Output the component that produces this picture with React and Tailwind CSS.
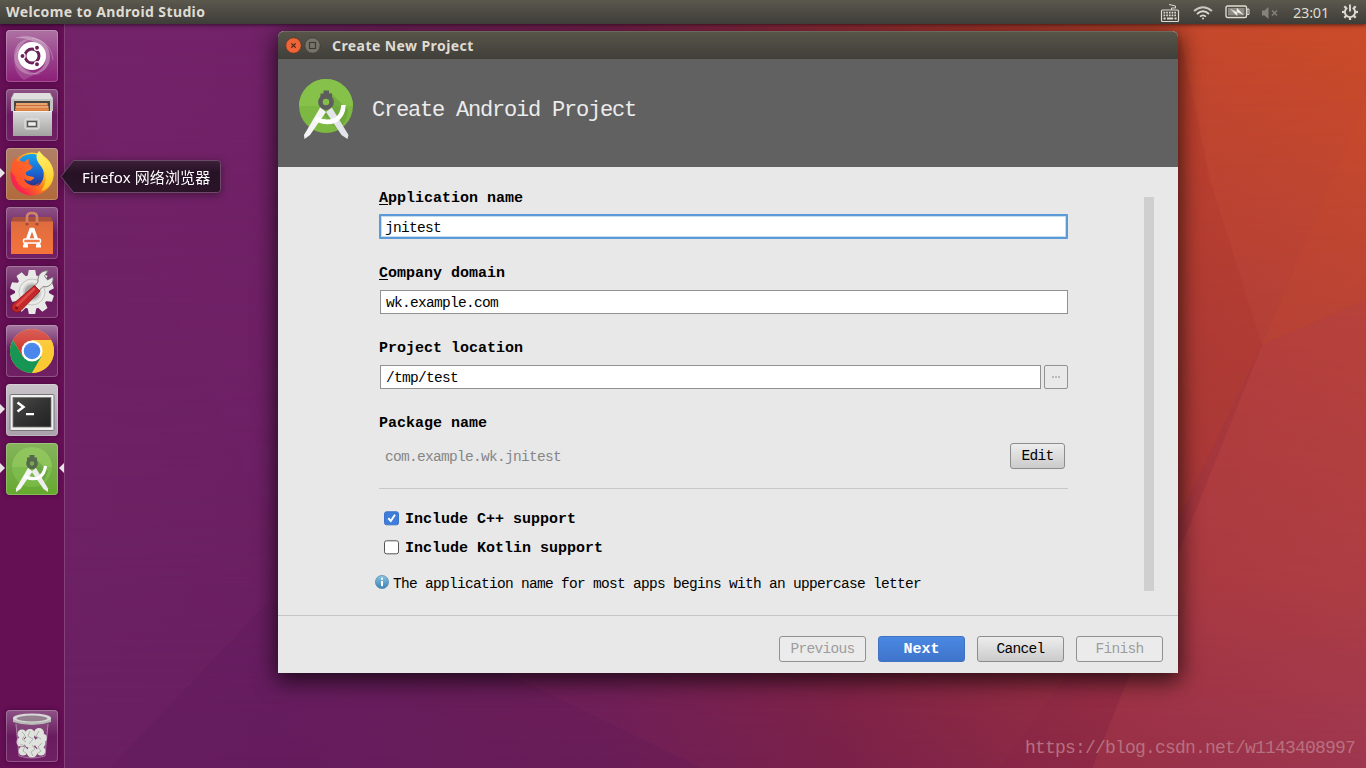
import React from 'react';

const MONO = "font-['Liberation_Mono',monospace]";
const BODY = `text-[14.5px] tracking-[-0.7px] ${MONO}`;
const UI = "font-['Noto_Sans','Noto_Sans_CJK_SC',sans-serif]";

function Wallpaper() {
  return (
    <svg className="absolute inset-0" width="1366" height="768" viewBox="0 0 1366 768" aria-hidden="true">
      <defs>
        <linearGradient id="wpBase" x1="0" y1="0" x2="1" y2="0">
          <stop offset="0" stopColor="#732468" />
          <stop offset="0.2" stopColor="#712267" />
          <stop offset="0.45" stopColor="#7d2150" />
          <stop offset="0.7" stopColor="#a8352f" />
          <stop offset="0.88" stopColor="#c5482c" />
          <stop offset="1" stopColor="#ca4b29" />
        </linearGradient>
        <linearGradient id="wpLow" x1="0" y1="0" x2="1" y2="0">
          <stop offset="0" stopColor="#6a2063" />
          <stop offset="0.2" stopColor="#681e60" />
          <stop offset="0.45" stopColor="#6e1f58" />
          <stop offset="0.62" stopColor="#7a2149" />
          <stop offset="0.8" stopColor="#8f2b46" />
          <stop offset="1" stopColor="#973450" />
        </linearGradient>
        <linearGradient id="wpFade" x1="0" y1="0" x2="0" y2="1">
          <stop offset="0.05" stopColor="#000" />
          <stop offset="0.45" stopColor="#666" />
          <stop offset="0.75" stopColor="#999" />
          <stop offset="1" stopColor="#fff" />
        </linearGradient>
        <mask id="wpMask"><rect width="1366" height="768" fill="url(#wpFade)" /></mask>
      </defs>
      <rect width="1366" height="768" fill="url(#wpBase)" />
      <rect width="1366" height="768" fill="url(#wpLow)" mask="url(#wpMask)" />
      <path d="M64 24L110 180L270 520L278 24Z" fill="#7a2670" opacity=".14" />
      <path d="M270 600L110 768L700 768L480 660Z" fill="#4d1450" opacity=".12" />
      <path d="M1178 24L1210 180L1262 345L1178 520Z" fill="#a82e28" opacity=".18" />
      <path d="M1366 100L1262 345L1366 300Z" fill="#d2552c" opacity=".12" />
      <path d="M1262 345L1366 300L1366 768L1092 768Z" fill="#b8424e" opacity=".2" />
      <path d="M1262 345L1178 520L1000 768L1092 768Z" fill="#84204a" opacity=".18" />
    </svg>
  );
}

function KeyboardIcon() {
  return (
    <svg width="20" height="20" viewBox="0 0 20 20" fill="none" stroke="#dfdbd2" strokeWidth="1.2">
      <path d="M11.5 7V5L15.5 5V3L9 1.500" strokeWidth="1" />
      <rect x="1.5" y="7" width="17" height="11.5" rx="1" />
      <path d="M3.5 9.7h13M3.5 12.3h13" strokeWidth="1.8" strokeDasharray="1.7 1" />
      <path d="M3.5 15.5h2.2M7 15.5h6.2M14.5 15.5h2" strokeWidth="1.8" />
    </svg>
  );
}

function WifiIcon() {
  return (
    <svg width="20" height="16" viewBox="0 0 20 16" fill="none" stroke="#dfdbd2" strokeWidth="1.8">
      <path d="M1 6Q10-1.500 19 6" opacity=".85" />
      <path d="M4 9Q10 3.500 16 9" />
      <path d="M7 11.700Q10 9 13 11.700" />
      <circle cx="10" cy="13.500" r="1" fill="#dfdbd2" stroke="none" />
    </svg>
  );
}

function BatteryIcon() {
  return (
    <svg width="25" height="14" viewBox="0 0 25 14">
      <rect x="1" y="1" width="20.500" height="11.500" rx="1.500" fill="none" stroke="#dfdbd2" strokeWidth="1.400" />
      <rect x="3" y="3" width="16.500" height="7.500" fill="#8d8a82" />
      <path d="M22 4h2v5.500h-2z" fill="none" stroke="#dfdbd2" strokeWidth="1" />
      <path d="M6 4.500L12 7.500V3.300L18 9.500L12 6.800V10.500Z" fill="#fff" stroke="#dfdbd2" strokeWidth=".6" />
    </svg>
  );
}

function MutedIcon() {
  return (
    <svg width="18" height="14" viewBox="0 0 18 14">
      <path d="M1 4.500h2.500L7.500 1v12L3.500 9.500H1z" fill="#85827a" />
      <path d="M11 4.500l5 5M16 4.500l-5 5" stroke="#85827a" strokeWidth="1.500" />
    </svg>
  );
}

const RAYS = [45, 90, 135, 180, 225, 270, 315];

function SessionIcon() {
  return (
    <svg width="18" height="18" viewBox="0 0 18 18" fill="none" stroke="#dfdbd2">
      <path d="M6.300 4.700A5.100 5.100 0 1 0 11.700 4.700" strokeWidth="1.900" />
      <path d="M9 1.500v7" strokeWidth="1.900" />
      {RAYS.map((a) => <path key={a} d="M9 3.500V1" strokeWidth="2.200" transform={`rotate(${a} 9 9)`} />)}
    </svg>
  );
}

function TopPanel() {
  return (
    <header className="relative flex h-6 items-center justify-between bg-linear-to-b from-[#5b584d] to-[#3e3d38] pr-[11px] pl-1.5 shadow-[0_1px_4px_rgba(0,0,0,0.6)]">
      <span className={`text-[14px] leading-6 font-bold tracking-[0.39px] text-[#dfdbd2] ${UI}`}>Welcome to Android Studio</span>
      <div className="flex h-6 items-center">
        <div className="mt-0.5 mr-[13px]"><KeyboardIcon /></div>
        <div className="mt-px mr-3"><WifiIcon /></div>
        <div className="mr-[11px]"><BatteryIcon /></div>
        <div className="mt-px mr-3.5"><MutedIcon /></div>
        <span className={`mr-3 w-9 text-[14.5px] leading-6 tracking-[-0.2px] whitespace-nowrap text-[#dfdbd2] ${UI}`}>23:01</span>
        <div className="-mr-1"><SessionIcon /></div>
      </div>
    </header>
  );
}

function DashArt() {
  return (
    <svg width="52" height="52" viewBox="0 0 52 52">
      <path d="M9 8C22 3 44 8 44 27C44 39 34 45 24 44C36 42 41 34 39 25C36 12 22 8 9 8Z" fill="#fff" opacity=".32" />
      <path d="M9 20C4 36 18 50 36 43C26 45 14 38 12 28C11 20 16 12 24 9C16 9 11 13 9 20Z" fill="#fff" opacity=".25" />
      <path d="M18 50C6 42 6 24 14 15C10 30 14 40 28 45Z" fill="#fff" opacity=".15" />
      <path d="M26 8C38 10 46 18 47 30" fill="none" stroke="#fff" opacity=".25" />
      <circle cx="26" cy="26" r="14" fill="#fff" />
      <circle cx="26" cy="26" r="7" fill="none" stroke="#6b2058" strokeWidth="3" />
      <g fill="#6b2058" stroke="#fff" strokeWidth="1.300">
        <circle cx="16.500" cy="26" r="2.600" /><circle cx="31" cy="17.700" r="2.600" /><circle cx="31" cy="34.300" r="2.600" />
      </g>
    </svg>
  );
}

function FilesArt() {
  return (
    <svg width="52" height="52" viewBox="0 0 52 52">
      <defs><linearGradient id="cab" x1="0" y1="0" x2="0" y2="1"><stop offset="0" stopColor="#dcdcdc" /><stop offset="1" stopColor="#a2a2a0" /></linearGradient></defs>
      <path d="M8 4H44L47 9V22H5V9Z" fill="#c4c4c2" />
      <path d="M8 4H44L46 10H6Z" fill="#dededc" />
      <rect x="8" y="12" width="36" height="11" fill="#4a4440" />
      <rect x="10" y="14" width="32" height="9" fill="#c9703a" />
      <path d="M10 15h31M9.500 18h33" stroke="#f3b784" strokeWidth="1.500" />
      <path d="M9 20.500h34" stroke="#e98a49" strokeWidth="2" />
      <rect x="7" y="22" width="39" height="25" fill="url(#cab)" />
      <path d="M7 22.500h39" stroke="#f2f2f0" />
      <rect x="19" y="30" width="14" height="10" rx="1.500" fill="#c9c9c7" stroke="#e8e8e8" />
      <rect x="21.500" y="32.500" width="9" height="5" fill="#eee" stroke="#5a5a5a" strokeWidth="1.500" />
    </svg>
  );
}

function FirefoxArt() {
  return (
    <svg width="52" height="52" viewBox="0 0 52 52">
      <defs>
        <linearGradient id="ffFlame" x1=".95" y1=".1" x2=".15" y2=".8"><stop offset="0" stopColor="#fff44f" /><stop offset=".35" stopColor="#ffc01f" /><stop offset=".62" stopColor="#ff751e" /><stop offset="1" stopColor="#f5244a" /></linearGradient>
        <linearGradient id="ffBlue" x1=".5" y1="0" x2=".5" y2="1"><stop offset="0" stopColor="#15a6f0" /><stop offset=".6" stopColor="#1c62cf" /><stop offset="1" stopColor="#2a2f85" /></linearGradient>
        <linearGradient id="ffYel" x1=".5" y1="0" x2=".5" y2="1"><stop offset="0" stopColor="#fff36a" /><stop offset="1" stopColor="#ffc420" /></linearGradient>
      </defs>
      <circle cx="26" cy="26" r="21.500" fill="url(#ffFlame)" />
      <path d="M13.500 12C17 6 27 4.500 33 7.500C31 12 33 15 36 19C39 25 38 33 33 37C28 40 20 37 18 31C20 32 23 34 26 32C29 30 29 29 25 28.500C21 28 19 27 20 24C22 22.500 25.500 22 26 19L22 16L22.500 11.500C20 12 18.500 13.500 17.500 15Z" fill="url(#ffBlue)" />
      <path d="M4.800 22C5 16 7 12 10 8.500C10 11 10.500 12.500 11.500 14C14 12.500 16.500 13 18.500 14C19.500 12.500 21.500 11 24 10.500C22 14 23 16 27 18.500C26 21.500 22 21.500 19.500 23.500C18 25.500 19.500 27 17.500 31C21 38 30 39 34 34C28 44 14 42 10 32Z" fill="#ff5a2a" opacity=".8" />
      <path d="M33 3C38 8 39 10 41 13C47 17 48.500 24 47 31C45 38 40 42 35 43C40 36 41 29 38 23C35 17 30.500 14 30.500 9C30.500 6 31.500 5 33 3Z" fill="url(#ffYel)" />
      <path d="M4.800 24C4 40 16 48 27 47.500C16 44 10 37 9 28Z" fill="#fb2554" opacity=".7" />
    </svg>
  );
}

function SoftwareArt() {
  return (
    <svg width="52" height="52" viewBox="0 0 52 52">
      <defs><linearGradient id="bag" x1="0" y1="0" x2="0" y2="1"><stop offset="0" stopColor="#de6c3f" /><stop offset="1" stopColor="#f4733a" /></linearGradient></defs>
      <path d="M7 10H45L47 15H5Z" fill="#a8523d" />
      <rect x="5" y="14.500" width="42" height="32.500" fill="url(#bag)" />
      <path d="M21 17V10Q21 6 26 6Q31 6 31 10V17" fill="none" stroke="#d28468" strokeWidth="2.600" />
      <circle cx="21" cy="17" r="1.600" fill="#a8492d" /><circle cx="31" cy="17" r="1.600" fill="#a8492d" />
      <path d="M19 39.500L25 22.500H27L33 39.500" fill="none" stroke="#fff" strokeWidth="3.400" />
      <path d="M17 39h5M30 39h5" stroke="#fff" strokeWidth="3" />
      <rect x="17.500" y="32" width="17" height="4" rx="1.500" fill="#ef7c4c" stroke="#fff" strokeWidth="1.500" />
    </svg>
  );
}

const TEETH = [0, 36, 72, 108, 144, 180, 216, 252, 288, 324];

function SettingsArt() {
  return (
    <svg width="52" height="52" viewBox="0 0 52 52">
      <g fill="#e9e9e8">
        {TEETH.map((a) => <path key={a} d="M21.500 11L22.800 4H29.200L30.500 11Z" transform={`rotate(${a} 26 26)`} />)}
        <circle cx="26" cy="26" r="17" />
      </g>
      <circle cx="26" cy="26" r="13" fill="none" stroke="#c5c5c3" strokeWidth="1" />
      <circle cx="26" cy="26" r="8.500" fill="#a7a5a6" stroke="#cfcfcd" strokeWidth="2" />
      <path d="M32 16C31 8 37 4 42 5L38.500 10L41.500 14L47 11C48 18 42 22 37 20.500L32 26L27.500 21.500Z" fill="#e9e9e9" stroke="#777" strokeWidth=".9" />
      <path d="M28.500 19.500L34 25L15 44.500C10 49 3 43 7 38Z" fill="#c4272a" stroke="#8a1518" strokeWidth=".8" />
      <path d="M28 23L11 39.500" stroke="#e04a48" strokeWidth="2.500" strokeLinecap="round" />
      <circle cx="10.500" cy="42" r="1.500" fill="#7c1216" />
    </svg>
  );
}

function ChromeArt() {
  return (
    <svg width="52" height="52" viewBox="0 0 52 52">
      <defs><linearGradient id="shine" x1="0" y1="0" x2="0" y2="1"><stop offset="0" stopColor="#fff" stopOpacity=".22" /><stop offset="1" stopColor="#fff" stopOpacity="0" /></linearGradient></defs>
      <circle cx="26" cy="26" r="22" fill="#fbc934" />
      <path d="M6.950 15A22 22 0 0 1 45.050 15H26L16.470 31.500Z" fill="#d03c34" />
      <path d="M6.950 15A22 22 0 0 0 26 48L35.530 31.500L16.470 31.500Z" fill="#169554" />
      <path d="M45.050 15A22 22 0 0 1 26 48L35.530 31.500V20L26 15Z" fill="#fbc934" />
      <circle cx="26" cy="26" r="10.500" fill="#fff" />
      <circle cx="26" cy="26" r="8.300" fill="#4a86ec" />
      <path d="M0 0H52V20Q26 26 0 20Z" fill="url(#shine)" />
    </svg>
  );
}

function TerminalArt() {
  return (
    <svg width="52" height="52" viewBox="0 0 52 52">
      <defs><linearGradient id="scr" x1="0" y1="0" x2="1" y2="1"><stop offset="0" stopColor="#4b4b49" /><stop offset=".5" stopColor="#333" /><stop offset="1" stopColor="#222" /></linearGradient></defs>
      <rect x="4" y="10.500" width="44" height="36" rx="1" fill="#f0f0ef" stroke="#77757a" />
      <rect x="7" y="13.500" width="38" height="29.500" fill="url(#scr)" stroke="#777" strokeWidth=".8" />
      <path d="M11.500 18.500L17.500 23L11.500 27.500" fill="none" stroke="#fff" strokeWidth="2.500" />
      <path d="M20 30.200h8" stroke="#fff" strokeWidth="2.200" />
    </svg>
  );
}

function StudioLogo() {
  return (
    <svg width="56" height="64" viewBox="0 0 56 64" aria-hidden="true">
      <circle cx="28" cy="28" r="27" fill="#7cb842" />
      <path d="M1 28A27 27 0 0 1 55 28Z" fill="#86c24a" />
      <path d="M32 14L50 32A27 27 0 0 1 40 52L25 36Z" fill="#5f9435" opacity=".45" />
      <path d="M25.500 12.500h5.500v3h3v7h-11.500v-7h3z" fill="#5d5d5d" />
      <circle cx="28" cy="24" r="5.600" fill="#85bd49" stroke="#5d5d5d" strokeWidth="4.600" />
      <path d="M22.200 29.500L28 34L12 57L6.500 61L6 57Z" fill="#f4f4f4" />
      <path d="M33.800 29.500L28 34L43.500 57L49.500 61L50.500 57Z" fill="#e4e5ea" />
      <path d="M17.500 40.500Q27 46 37 42.500Q45 38 45.500 27" fill="none" stroke="#fff" strokeWidth="4.600" />
    </svg>
  );
}

function StudioArt() {
  return (
    <svg width="52" height="52" viewBox="0 0 52 52">
      <circle cx="26" cy="24" r="20" fill="#8cd05c" opacity=".4" />
      <path d="M6 24A20 20 0 0 1 46 24Z" fill="#a5d56c" opacity=".35" />
      <path d="M29 15L42 28L38 38L27 32Z" fill="#4a842f" opacity=".35" />
      <path d="M23.500 12h5v2.500h2.500v5h-10v-5h2.500z" fill="#56694c" />
      <circle cx="26" cy="20.500" r="4" fill="#78a857" stroke="#56694c" strokeWidth="3.500" />
      <path d="M22 25L26.500 28.500L14.500 46L10 49L10 45.500Z" fill="#f5f5f5" />
      <path d="M30 25L25.500 28.500L37.500 46L42 49L42 45.500Z" fill="#ededed" />
      <path d="M18 33Q26 37.500 33 34.500Q38.500 31 39.500 23" fill="none" stroke="#fff" strokeWidth="3.200" />
    </svg>
  );
}

function TrashArt() {
  return (
    <svg width="52" height="52" viewBox="0 0 52 52">
      <path d="M9 11L13 45Q26 51 39 45L43 11Z" fill="#8f5a86" opacity=".5" />
      <g fill="#dfe2dd">
        <circle cx="16" cy="24" r="4.500" /><circle cx="24" cy="24" r="5" /><circle cx="33" cy="23" r="5" /><circle cx="37" cy="28" r="4" />
        <circle cx="15" cy="32" r="4.500" /><circle cx="24" cy="32" r="6" /><circle cx="34" cy="33" r="5.500" />
        <circle cx="17" cy="41" r="4.500" /><circle cx="26" cy="42" r="5.500" /><circle cx="35" cy="41" r="4.500" />
      </g>
      <g fill="none" stroke="#a9aea7" strokeWidth=".9">
        <path d="M16 22l3 3-3 4 4 3M24 21l-2 5 5 3-4 5M33 21l-3 5 5 3M14 34l5 2-2 5 4 3M26 35l3 4-4 3 2 4M36 33l-4 4 3 4-4 3" />
      </g>
      <path d="M10 14L13 46Q26 50 39 46L42 14" fill="none" stroke="#c6a9c2" strokeWidth=".8" opacity=".8" />
      <path d="M7 8V12Q26 18 45 12V8Z" fill="#b9b9b8" />
      <ellipse cx="26" cy="8" rx="19" ry="4.500" fill="#d8d8d6" />
      <ellipse cx="26" cy="8.500" rx="15.500" ry="2.900" fill="#94808f" />
    </svg>
  );
}

function Tile({ art, tone, left, right }) {
  return (
    <div className="relative">
      <div className={`size-[52px] overflow-hidden rounded-[4px] shadow-[inset_0_0_0_1px_rgba(255,255,255,0.22),0_0_4px_rgba(30,0,30,0.45)] ${tone}`}>{art}</div>
      {left && <span className="absolute top-[20px] -left-[6px] border-y-[5px] border-l-[5px] border-y-transparent border-l-[#e8e4e6]" />}
      {right && <span className="absolute top-[20px] -right-[6px] border-y-[5px] border-r-[5px] border-y-transparent border-r-[#e8e4e6]" />}
    </div>
  );
}

function Launcher() {
  const glass = 'bg-linear-to-b from-[#8d5286] via-[#6a1b60] to-[#712064]';
  return (
    <nav className="flex w-[65px] shrink-0 flex-col justify-between border-r border-[#834178] bg-[#650f55] px-1.5 py-1.5">
      <div className="flex flex-col gap-[7px]">
        <Tile art={<DashArt />} tone="bg-linear-to-b from-[#ae73a3] via-[#99438c] to-[#8d1d78]" />
        <Tile art={<FilesArt />} tone={glass} />
        <Tile art={<FirefoxArt />} tone="bg-linear-to-b from-[#b07f68] to-[#b16a3a]" left />
        <Tile art={<SoftwareArt />} tone={glass} />
        <Tile art={<SettingsArt />} tone={glass} />
        <Tile art={<ChromeArt />} tone={glass} />
        <Tile art={<TerminalArt />} tone="bg-linear-to-b from-[#c9c3c9] to-[#aaa1aa]" left />
        <Tile art={<StudioArt />} tone="bg-linear-to-b from-[#86b35b] to-[#65a92d]" left right />
      </div>
      <Tile art={<TrashArt />} tone={glass} />
    </nav>
  );
}

function Tooltip() {
  return (
    <div className="absolute top-[160px] left-[60px] h-[33px] w-[161px] drop-shadow-[0_2px_4px_rgba(0,0,0,0.4)]">
      <svg className="absolute inset-0" width="161" height="33" viewBox="0 0 161 33">
        <defs><linearGradient id="tip" x1="0" y1="0" x2="0" y2="1"><stop offset="0" stopColor="#3d2039" /><stop offset=".4" stopColor="#261125" /><stop offset="1" stopColor="#2a1428" /></linearGradient></defs>
        <path d="M1 16.500L13.500 .5H157.500Q160.500 .5 160.500 3.500V29.500Q160.500 32.500 157.500 32.500H13.500Z" fill="url(#tip)" stroke="#6e4a69" />
      </svg>
      <span className={`relative block pl-[22px] text-[15px] leading-[34px] tracking-[0.12px] whitespace-nowrap text-white ${UI}`}>Firefox 网络浏览器</span>
    </div>
  );
}

const INPUT = `flex h-6 items-center border border-[#919191] bg-white pt-0.5 pl-[5px] leading-5 text-black ${BODY}`;

function Field({ label, first, children }) {
  return (
    <div className="h-[75px]">
      <div className={`h-5 text-[15px] leading-[22px] font-bold text-black ${MONO}`}>
        {first && <span className="underline decoration-1 underline-offset-2">{first}</span>}{label}
      </div>
      {children}
    </div>
  );
}

function Check({ label, on }) {
  return (
    <div className="flex h-[29px] items-center pl-[5px]">
      <svg className="mr-1.5" width="15" height="15" viewBox="0 0 15 15">
        <rect x=".5" y=".8" width="14" height="13" rx="2" fill={on ? '#3f7ddb' : '#fff'} stroke={on ? '#3a72cc' : '#545454'} />
        {on && <path d="M4.300 7.300L6.800 10L11 3.800" fill="none" stroke="#fff" strokeWidth="2" />}
      </svg>
      <span className={`pt-0.5 text-[15px] leading-5 font-bold text-black ${MONO}`}>{label}</span>
    </div>
  );
}

function FooterButton({ label, tone }) {
  return (
    <button className={`h-[26px] w-[87px] rounded-[3px] border text-center leading-[25px] ${tone}`}>{label}</button>
  );
}

function Dialog() {
  return (
    <section className="absolute top-[31px] left-[278px] flex h-[642px] w-[900px] flex-col rounded-t-[6px] bg-[#e8e8e8] shadow-[0_6px_22px_2px_rgba(0,0,0,0.7)]">
      <div className="flex h-7 shrink-0 items-center rounded-t-[6px] border-t border-[#6b695f] bg-linear-to-b from-[#575449] to-[#403f3a] pl-2">
        <svg width="35" height="17" viewBox="0 0 35 17">
          <circle cx="7.500" cy="8.500" r="7.700" fill="#ee6537" stroke="#5b2b18" strokeWidth=".6" />
          <path d="M5.300 6.300L9.700 10.700M9.700 6.300L5.300 10.700" stroke="#47251a" strokeWidth="1.200" />
          <circle cx="26.500" cy="8.500" r="7.700" fill="#76736a" stroke="#35342f" strokeWidth=".6" />
          <rect x="23.500" y="5.500" width="6" height="6" fill="none" stroke="#3a3934" strokeWidth="1.100" />
        </svg>
        <span className={`ml-[11px] text-[14px] font-bold tracking-[0.42px] text-[#dfdbd2] ${UI}`}>Create New Project</span>
      </div>
      <div className="flex h-[108px] shrink-0 items-center bg-[#616161] pl-5">
        <div className="-mt-1.5"><StudioLogo /></div>
        <h1 className={`-mt-1.5 ml-[18px] text-[22px] font-normal tracking-[-1.2px] text-[#ececec] ${MONO}`}>Create Android Project</h1>
      </div>
      <div className="flex h-[449px] shrink-0 justify-between border-b border-[#c4c4c4] pt-[21px] pr-6 pl-[101px]">
        <div className="w-[689px]">
          <Field first="A" label="pplication name">
            <div className={`mt-1.5 flex h-[25px] items-center rounded-[1px] border-2 border-[#5b9ad6] bg-white pt-0.5 pl-1 leading-5 text-black shadow-[inset_0_0_0_1px_#c3ddf3] ${BODY}`}>jnitest</div>
          </Field>
          <Field first="C" label="ompany domain">
            <div className={`mt-[7px] ml-px ${INPUT}`}>wk.example.com</div>
          </Field>
          <Field label="Project location">
            <div className="mt-[7px] ml-px flex gap-[3px]">
              <div className={`w-[661px] ${INPUT}`}>/tmp/test</div>
              <button className="flex size-6 items-center justify-center rounded-[2px] border border-[#929292] bg-[#e9e9e9]">
                <svg width="8" height="2" viewBox="0 0 8 2"><path d="M.5 1h1M3.500 1h1M6.500 1h1" stroke="#333" /></svg>
              </button>
            </div>
          </Field>
          <div className="h-[76px] border-b border-[#c8c8c8]">
            <div className={`h-5 text-[15px] leading-[22px] font-bold text-black ${MONO}`}>Package name</div>
            <div className="mt-2.5 flex items-center justify-between pr-[3px] pl-1.5">
              <span className={`pt-0.5 leading-5 text-[#868686] ${BODY}`}>com.example.wk.jnitest</span>
              <button className={`h-[26px] w-[55px] rounded-[3px] border border-[#8c8c8c] bg-linear-to-b from-[#ededed] to-[#cbcbcb] text-center leading-[25px] text-black ${BODY}`}>Edit</button>
            </div>
          </div>
          <div className="pt-[15px]">
            <Check label="Include C++ support" on />
            <Check label="Include Kotlin support" />
          </div>
          <div className="mt-2.5 -ml-1 flex h-5 items-center">
            <svg className="mr-1 shrink-0" width="14" height="14" viewBox="0 0 14 14">
              <defs><linearGradient id="info" x1="0" y1="0" x2="0" y2="1"><stop offset="0" stopColor="#89c5e4" /><stop offset="1" stopColor="#3c81b4" /></linearGradient></defs>
              <circle cx="7" cy="7" r="6.600" fill="url(#info)" stroke="#568bad" strokeWidth=".7" />
              <path d="M7 2.800v2M7 6v5.200" stroke="#fff" strokeWidth="2" />
            </svg>
            <span className={`pt-[3px] leading-5 whitespace-nowrap text-black ${BODY}`}>The application name for most apps begins with an uppercase letter</span>
          </div>
        </div>
        <div className="mt-[9px] h-[394px] w-2.5 bg-[#cfcfcf]" />
      </div>
      <div className="flex justify-end gap-3 pt-5 pr-[15px]">
        <FooterButton label="Previous" tone={`border-[#919191] bg-[#ebebeb] text-[#9d9d9d] ${BODY}`} />
        <FooterButton label="Next" tone={`border-[#4273c0] bg-linear-to-b from-[#4a88e2] to-[#3f74cb] text-[15px] font-bold text-white ${MONO}`} />
        <FooterButton label="Cancel" tone={`border-[#8c8c8c] bg-linear-to-b from-[#ededed] to-[#cbcbcb] text-black ${BODY}`} />
        <FooterButton label="Finish" tone={`border-[#919191] bg-[#ebebeb] text-[#9d9d9d] ${BODY}`} />
      </div>
    </section>
  );
}

export default function App() {
  return (
    <div className="relative h-[768px] w-[1366px] overflow-hidden">
      <Wallpaper />
      <div className="relative flex h-full flex-col">
        <div className="z-10"><TopPanel /></div>
        <div className="flex min-h-0 flex-1"><Launcher /></div>
      </div>
      <Dialog />
      <Tooltip />
      <span className={`absolute right-[11px] bottom-2 text-[18px] leading-6 tracking-[-0.8px] text-[#b8707f] ${MONO}`}>https://blog.csdn.net/w1143408997</span>
    </div>
  );
}
